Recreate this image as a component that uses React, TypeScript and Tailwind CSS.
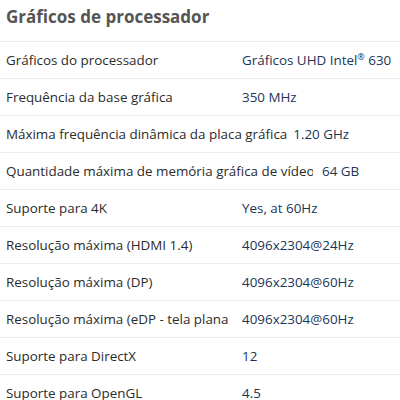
import React from "react";

const rows: { label: string; value: React.ReactNode; lw?: string }[] = [
  {
    label: "Gráficos do processador",
    value: (
      <>
        Gráficos UHD Intel<span className="text-[9px] relative top-[-5px]">®</span> 630
      </>
    ),
  },
  { label: "Frequência da base gráfica", value: "350 MHz" },
  { label: "Máxima frequência dinâmica da placa gráfica", value: "1.20 GHz", lw: "auto" },
  { label: "Quantidade máxima de memória gráfica de vídeo", value: "64 GB", lw: "313" },
  { label: "Suporte para 4K", value: "Yes, at 60Hz" },
  { label: "Resolução máxima (HDMI 1.4)", value: "4096x2304@24Hz" },
  { label: "Resolução máxima (DP)", value: "4096x2304@60Hz" },
  { label: "Resolução máxima (eDP - tela plana)", value: "4096x2304@60Hz", lw: "edp" },
  { label: "Suporte para DirectX", value: "12" },
  { label: "Suporte para OpenGL", value: "4.5" },
];

export default function App() {
  return (
    <div
      className="w-[400px] h-[400px] overflow-hidden bg-white"
      style={{ fontFamily: '"Open Sans", "Noto Sans", sans-serif' }}
    >
      <h2 className="pl-[6px] pt-[4px] h-[41px] text-[17px] font-bold text-[#555555] leading-[26px]">
        Gráficos de processador
      </h2>
      {rows.map((r, i) => (
        <div
          key={i}
          className="flex items-center h-[37px] border-t border-[#ececec] text-[13.4px] whitespace-nowrap"
        >
          {r.lw === "auto" ? (
            <div className="pl-[6px] text-[#2b2b2b] mr-[6px]">{r.label}</div>
          ) : r.lw === "313" ? (
            <div className="pl-[6px] w-[313px] overflow-hidden text-[#2b2b2b] mr-[9px]">{r.label}</div>
          ) : r.lw === "edp" ? (
            <div className="pl-[6px] w-[228px] overflow-hidden text-[#2b2b2b] mr-[14px]">{r.label}</div>
          ) : (
            <div className="pl-[6px] w-[230px] overflow-hidden text-[#2b2b2b] mr-[12px]">{r.label}</div>
          )}
          <div className="text-[#1a3558]">{r.value}</div>
        </div>
      ))}
    </div>
  );
}
